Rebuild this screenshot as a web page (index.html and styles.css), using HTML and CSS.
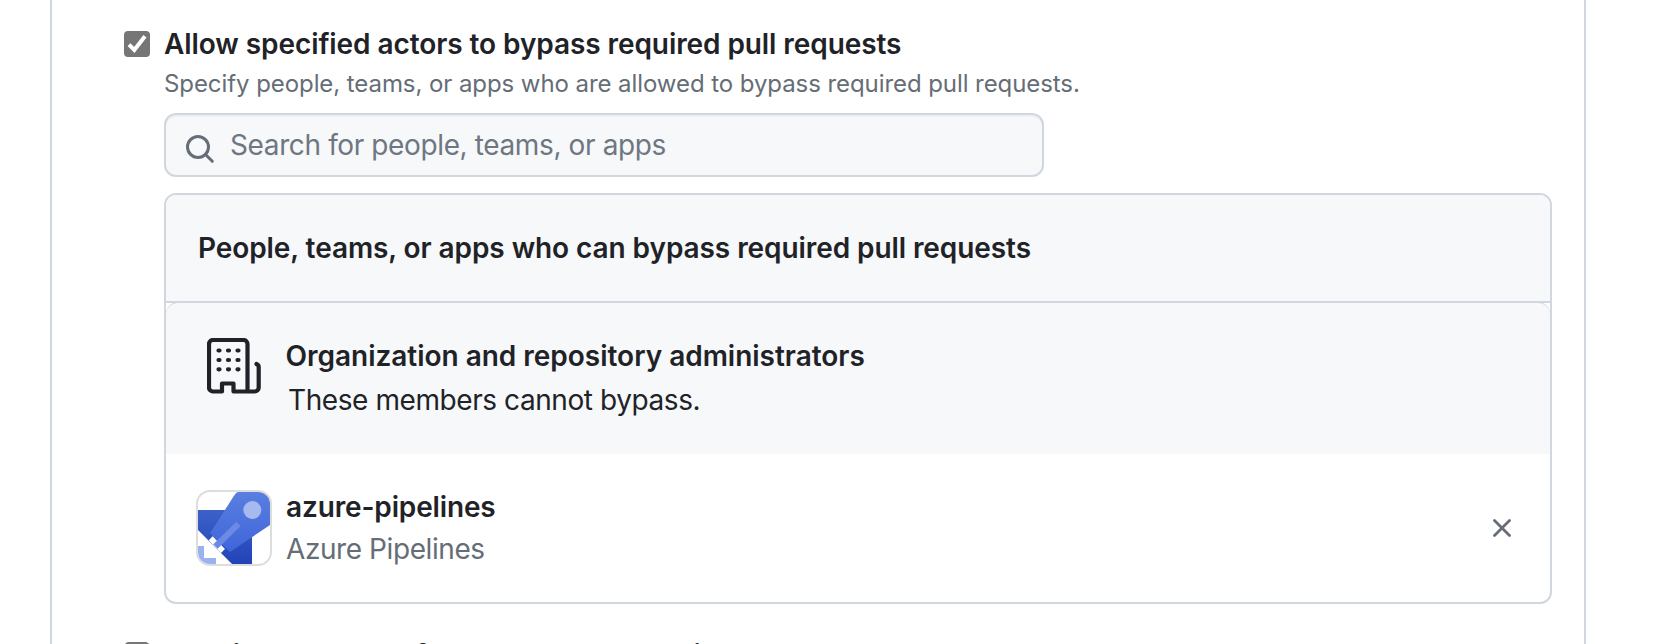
FILE: index.html
```html
<!DOCTYPE html>
<html lang="en">
<head>
<meta charset="utf-8">
<title>Branch protection rule</title>
<link rel="stylesheet" href="styles.css">
</head>
<body>
<main class="panel">
  <section class="option">
    <svg class="checkbox" viewBox="0 0 26 26"><rect width="26" height="26" rx="4" fill="#767676"/><path d="M5 13.6l5.3 5.3L21 5.2" fill="none" stroke="#fff" stroke-width="4"/></svg>
    <div class="option-body">
      <h2 class="title t-allow">Allow specified actors to bypass required pull requests</h2>
      <p class="note">Specify people, teams, or apps who are allowed to bypass required pull requests.</p>
      <div class="search">
        <svg class="search-icon" viewBox="0 0 32 32" fill="none" stroke="#656d76" stroke-width="3"><circle cx="14" cy="14" r="10.5"/><path d="M21.5 21.5l6.8 6.8" stroke-linecap="round"/></svg>
        <span class="placeholder">Search for people, teams, or apps</span>
      </div>
      <div class="box">
        <div class="box-header"><h3 class="title t-people">People, teams, or apps who can bypass required pull requests</h3></div>
        <div class="row row-muted">
          <svg class="org-icon" viewBox="0 0 54 56" fill="none" stroke="#1f2328" stroke-width="4.2" stroke-linecap="round" stroke-linejoin="round">
            <path d="M40.500 53.500V6a4 4 0 0 0-4-4H6a4 4 0 0 0-4 4v43.500a4 4 0 0 0 4 4h9v-8h11.500v8h21.200a4 4 0 0 0 4-4V29q0-2-2.200-3"/>
            <path d="M11.500 12.500h1M21 12.500h1M30.500 12.500h1M11.500 22h1M21 22h1M30.500 22h1M11.500 31.300h1M21 31.300h1M30.500 31.300h1"/>
          </svg>
          <div class="row-text">
            <h4 class="title t-org">Organization and repository administrators</h4>
            <p class="text t-members">These members cannot bypass.</p>
          </div>
        </div>
        <div class="row row-app">
          <div class="avatar">
            <svg viewBox="24 36 216 216">
              <defs>
                <linearGradient id="rear" x1="0" y1="0" x2="0" y2="1"><stop offset="0" stop-color="#3c62c8"/><stop offset="1" stop-color="#2243b8"/></linearGradient>
                <linearGradient id="front" x1="0" y1="0" x2="0" y2="1"><stop offset="0" stop-color="#5a7ee0"/><stop offset="1" stop-color="#3f66da"/></linearGradient>
              </defs>
              <path fill="url(#rear)" d="M24 90H186V252H126L24 150z"/>
              <path fill="url(#front)" d="M143 36H240V135L120 216L60 160L131 49Q137 39 143 36z"/>
              <path fill="#fff" d="M56 181L68 169L105 207L93 219z"/>
              <path fill="#6a8ae6" d="M139 125L152 138L83 206L70 193z"/>
              <path fill="#9bb2f0" d="M24 198H42V234H78V252H24z"/>
              <circle cx="187" cy="90" r="27" fill="#a6baf0"/>
            </svg>
          </div>
          <div class="row-text">
            <h4 class="title t-slug">azure-pipelines</h4>
            <p class="text muted t-app">Azure Pipelines</p>
          </div>
          <svg class="close" viewBox="0 0 18 18"><path d="M1.500 1.500l15 15M16.500 1.500l-15 15" stroke="#656d76" stroke-width="2.800" stroke-linecap="round"/></svg>
        </div>
      </div>
    </div>
  </section>
  <section class="option option-next">
    <svg class="checkbox" viewBox="0 0 26 26"><rect x="1" y="1" width="24" height="24" rx="4" fill="#fff" stroke="#767676" stroke-width="2"/></svg>
    <div class="option-body">
      <h2 class="title t-next">Require approval of the most recent reviewable push</h2>
    </div>
  </section>
</main>
</body>
</html>
```
FILE: styles.css
```css
* { box-sizing: border-box; margin: 0; }
body { height: 644px; overflow: hidden; background: #fff; color: #1f2328; font: 28px/42px Inter, "Liberation Sans", sans-serif; }
.panel { width: 1536px; height: 644px; margin-left: 50px; padding: 23px 32px 0 72px; border: solid #d0d7de; border-width: 0 2px; overflow: hidden; }
.option { display: flex; gap: 14px; }
.option-next { margin-top: 30px; }
.checkbox { flex: none; width: 26px; height: 26px; margin-top: 8px; }
.option-body { flex: 1; white-space: nowrap; }
.title { font-size: 28px; font-weight: 600; line-height: 42px; letter-spacing: -0.078px; }
.note { padding-top: 1px; margin-bottom: -1px; font-size: 24px; line-height: 36px; letter-spacing: -0.073px; color: #656d76; }
.search { display: flex; align-items: center; width: 880px; height: 64px; margin: 12px 0 16px; padding-left: 18px; border: 2px solid #d0d7de; border-radius: 12px; background: #f6f8fa; box-shadow: inset 0 2px 0 rgba(208, 215, 222, .2); }
.search-icon { width: 32px; height: 32px; margin-top: 7px; }
.placeholder { margin-left: 14px; letter-spacing: -0.38px; color: #6e7781; }
.box { width: 1388px; height: 411px; border: 2px solid #d0d7de; border-radius: 12px; overflow: hidden; }
.box-header { display: flex; align-items: center; height: 108px; padding-left: 32px; border-bottom: 2px solid #d0d7de; background: #f6f8fa; }
.row { display: flex; padding-top: 32px; }
.row-muted { height: 151px; background: #f6f8fa; border-radius: 12px 12px 0 0; box-shadow: 0 -1px 0 #d0d7de; }
.row-app { height: 148px; }
.org-icon { width: 54px; height: 56px; margin: 3px 24.5px 0 41px; }
.t-org { letter-spacing: -0.02px; }
.t-members { margin: 2px 0 0 2.500px; letter-spacing: -0.42px; }
.t-slug { letter-spacing: -0.14px; }
.t-app { letter-spacing: -0.42px; }
.avatar { width: 76px; height: 76px; margin: 4px 14px 0 30px; border: 2px solid #dcdddd; border-radius: 14px; overflow: hidden; }
.avatar svg { display: block; width: 72px; height: 72px; }
.muted { color: #656d76; }
.close { width: 18px; height: 18px; margin: 33px 39px 0 auto; }
```
